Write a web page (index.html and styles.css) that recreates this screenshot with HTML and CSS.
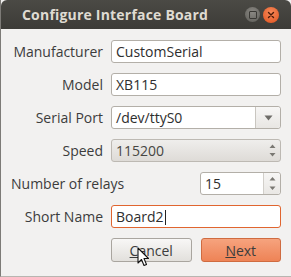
FILE: index.html
```html
<!DOCTYPE html>
<html>
<head>
    <title>Configure Interface Board</title>
    <link rel="stylesheet" href="styles.css">
</head>
<body>
    <div class="window">
        <div class="titlebar">
            <span class="title">Configure Interface Board</span>
            <div class="win-buttons">
                <span class="btn-max"><span class="max-square"></span></span>
                <span class="btn-close">
                    <svg width="8" height="8" viewBox="0 0 8 8"><path d="M1.5 1.5 L6.5 6.5 M6.5 1.5 L1.5 6.5" stroke="#4a1a08" stroke-width="1.4" stroke-linecap="round"/></svg>
                </span>
            </div>
        </div>

        <div class="content">
            <div class="form-grid">
                <label class="label">Manufacturer</label>
                <div class="entry">CustomSerial</div>

                <label class="label">Model</label>
                <div class="entry">XB115</div>

                <label class="label">Serial Port</label>
                <div class="combo-entry">
                    <span class="combo-text">/dev/ttyS0</span>
                    <span class="combo-arrow">
                        <svg width="9" height="6" viewBox="0 0 9 6"><path d="M0.5 0.5 L8.5 0.5 L4.5 5.5 Z" fill="#6e6c68"/></svg>
                    </span>
                </div>

                <label class="label">Speed</label>
                <div class="combo-box">
                    <span class="combo-text">115200</span>
                    <span class="updown">
                        <svg width="7" height="13" viewBox="0 0 7 13"><path d="M3.5 0.5 L6.5 4 L0.5 4 Z M3.5 12.5 L6.5 9 L0.5 9 Z" fill="#7a7873"/></svg>
                    </span>
                </div>
            </div>

            <div class="relays-row">
                <label class="label-left">Number of relays</label>
                <div class="spin">
                    <span class="spin-text">15</span>
                    <span class="spin-buttons">
                        <svg width="7" height="15" viewBox="0 0 7 15"><path d="M3.5 1 L6.5 4.5 L0.5 4.5 Z M3.5 14 L6.5 10.5 L0.5 10.5 Z" fill="#7a7873"/></svg>
                    </span>
                </div>
            </div>

            <div class="form-grid">
                <label class="label">Short Name</label>
                <div class="entry focused">Board2<span class="caret"></span></div>

                <span></span>
                <div class="buttons">
                    <button class="button"><u>C</u>ancel</button>
                    <button class="button suggested"><u>N</u>ext</button>
                </div>
            </div>

            <svg class="cursor" width="13" height="20" viewBox="0 0 13 20">
                <path d="M1 1 L1 16 L4.5 12.5 L7 18.5 L9.5 17.5 L7 11.5 L11.5 11.5 Z" fill="#fff" stroke="#111" stroke-width="1.1" stroke-linejoin="round"/>
            </svg>
        </div>
    </div>
</body>
</html>
```

FILE: styles.css
```css
body {
    margin: 0;
    background: #f2f1f0;
    font-family: "Open Sans", "DejaVu Sans", sans-serif;
}

.window {
    width: 291px;
    height: 277px;
    position: relative;
    background: #f2f1f0;
    border-left: 1px solid #7d7b77;
    border-bottom: 1px solid #b8b5b0;
    box-sizing: border-box;
    overflow: hidden;
}

.titlebar {
    height: 29px;
    background: linear-gradient(#4b4a45, #3c3b37);
    border-radius: 6px 6px 0 0;
    display: flex;
    align-items: center;
    padding: 0 12px 0 21px;
}

.title {
    flex: 1;
    color: #dfdbd2;
    font-weight: bold;
    font-size: 14px;
    letter-spacing: 0.2px;
}

.win-buttons {
    display: flex;
    gap: 3px;
    align-items: center;
}

.btn-max {
    width: 15px;
    height: 15px;
    border-radius: 50%;
    background: radial-gradient(circle at 50% 35%, #8a8883, #5d5c57);
    display: flex;
    align-items: center;
    justify-content: center;
}

.max-square {
    width: 6px;
    height: 6px;
    border: 1px solid #3a3935;
    border-radius: 1px;
}

.btn-close {
    width: 16px;
    height: 16px;
    border-radius: 50%;
    background: radial-gradient(circle at 50% 35%, #f78a5a, #e0521e);
    display: flex;
    align-items: center;
    justify-content: center;
}

.content {
    padding: 11px 10px 0 10px;
    display: flex;
    flex-direction: column;
    gap: 10px;
}

.form-grid {
    display: grid;
    grid-template-columns: 92px 1fr;
    column-gap: 8px;
    row-gap: 10px;
    align-items: center;
}

.label {
    text-align: right;
    color: #3c3c3c;
    font-size: 14px;
}

.label-left {
    flex: 1;
    color: #3c3c3c;
    font-size: 14px;
}

.entry {
    height: 23px;
    box-sizing: border-box;
    background: #fff;
    border: 1px solid #b3afa8;
    border-radius: 3px;
    padding: 0 4px;
    font-size: 14px;
    color: #2e2e2e;
    line-height: 21px;
}

.entry.focused {
    border-color: #e0652f;
}

.caret {
    display: inline-block;
    width: 1px;
    height: 15px;
    background: #222;
    vertical-align: -3px;
    margin-left: 1px;
}

.combo-entry {
    height: 23px;
    box-sizing: border-box;
    display: flex;
    border: 1px solid #b3afa8;
    border-radius: 3px;
    background: #fff;
}

.combo-text {
    flex: 1;
    padding: 0 4px;
    font-size: 14px;
    color: #2e2e2e;
    line-height: 21px;
}

.combo-arrow {
    width: 24px;
    border-left: 1px solid #c9c6c0;
    background: linear-gradient(#f7f6f5, #e8e6e3);
    border-radius: 0 3px 3px 0;
    display: flex;
    align-items: center;
    justify-content: center;
}

.combo-box {
    height: 23px;
    box-sizing: border-box;
    display: flex;
    border: 1px solid #bdb9b3;
    border-radius: 3px;
    background: linear-gradient(#efeeec, #dedbd7);
}

.combo-box .combo-text {
    color: #464643;
}

.updown {
    width: 16px;
    display: flex;
    align-items: center;
    justify-content: center;
}

.relays-row {
    display: flex;
    align-items: center;
}

.spin {
    width: 81px;
    height: 23px;
    box-sizing: border-box;
    display: flex;
    border: 1px solid #b3afa8;
    border-radius: 3px;
    background: #fff;
}

.spin-text {
    flex: 1;
    padding: 0 4px;
    font-size: 14px;
    color: #2e2e2e;
    line-height: 21px;
}

.spin-buttons {
    width: 16px;
    border-left: 1px solid #d2cfca;
    background: linear-gradient(#f7f6f5, #e9e7e4);
    border-radius: 0 3px 3px 0;
    display: flex;
    align-items: center;
    justify-content: center;
}

.buttons {
    display: flex;
    gap: 9px;
}

.button {
    flex: 1;
    height: 24px;
    border: 1px solid #a9a59f;
    border-radius: 3px;
    background: linear-gradient(#f8f7f6, #e2e0dc);
    font-family: "Open Sans", "DejaVu Sans", sans-serif;
    font-size: 14px;
    color: #3c3c3c;
    padding: 0;
}

.button.suggested {
    border-color: #cf6b40;
    background: linear-gradient(#f6a37e, #ee8356);
}

.cursor {
    position: absolute;
    left: 136px;
    top: 247px;
}
```
